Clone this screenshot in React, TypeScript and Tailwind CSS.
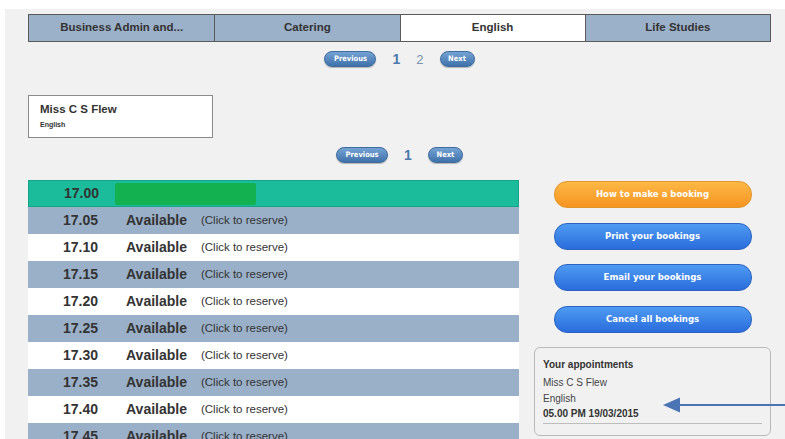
import React from "react";

const tabs = ["Business Admin and...", "Catering", "English", "Life Studies"];
const slots = ["17.05", "17.10", "17.15", "17.20", "17.25", "17.30", "17.35", "17.40", "17.45"];
const actions = ["Print your bookings", "Email your bookings", "Cancel all bookings"];

const condensed = { fontFamily: '"DejaVu Sans Condensed", "DejaVu Sans", Verdana, sans-serif' };

function PillButton({ label, width }: { label: string; width: string }) {
  return (
    <button
      className={`${width} h-[16px] rounded-full border border-[#3d6c9f] bg-gradient-to-b from-[#74a2d4] to-[#3f72aa] text-white text-[7.5px] font-bold leading-none flex items-center justify-center shadow-[0_1px_1px_rgba(0,0,0,0.25)]`}
      style={condensed}
    >
      {label}
    </button>
  );
}

function Pager({ pages }: { pages: number[] }) {
  return (
    <div className="flex items-center justify-center h-[16px]">
      <PillButton label="Previous" width="w-[52px]" />
      <div className="flex items-center gap-[16px] mx-[16px]">
        {pages.map((p, i) => (
          <span
            key={p}
            className={
              i === 0
                ? "text-[14px] font-bold text-[#4d79ab] leading-none"
                : "text-[13px] text-[#7892b3] leading-none"
            }
          >
            {p}
          </span>
        ))}
      </div>
      <PillButton label="Next" width="w-[35px]" />
    </div>
  );
}

function ActionButton({ label, orange }: { label: string; orange?: boolean }) {
  return (
    <button
      className={`w-[198px] h-[27px] rounded-[13px] border text-white text-[9.5px] font-bold flex items-center justify-center ${
        orange
          ? "border-[#e0962c] bg-gradient-to-b from-[#fdb845] to-[#f6941f]"
          : "border-[#2a62c0] bg-gradient-to-b from-[#4f9bf2] to-[#2a6cdc]"
      }`}
      style={condensed}
    >
      {label}
    </button>
  );
}

export default function App() {
  return (
    <div
      className="relative w-[785px] h-[439px] overflow-hidden bg-white text-[#333]"
      style={{ fontFamily: '"Liberation Sans", Arial, sans-serif' }}
    >
      <div className="ml-[5px] mt-[9px] h-[430px] bg-[#f1f1f1] pl-[23px] pt-[5px]">
        <div className="w-[743px]">
          {/* subject tabs */}
          <div className="grid grid-cols-4 h-[28px] border border-[#5a5a5a]">
            {tabs.map((t, i) => (
              <div
                key={t}
                className={`flex items-center justify-center text-[11.5px] font-bold ${
                  i > 0 ? "border-l border-[#5a5a5a]" : ""
                } ${t === "English" ? "bg-white" : "bg-[#9bb0c9]"}`}
              >
                {t}
              </div>
            ))}
          </div>

          <div className="mt-[9px]">
            <Pager pages={[1, 2]} />
          </div>

          {/* teacher card */}
          <div className="mt-[28px] w-[185px] h-[43px] bg-white border border-[#8a8a8a] pl-[11px] pt-[6px]">
            <div className="text-[11.5px] font-bold leading-[15px]">Miss C S Flew</div>
            <div className="text-[7px] font-bold mt-[3px] text-[#333]">English</div>
          </div>

          <div className="mt-[9px]">
            <Pager pages={[1]} />
          </div>

          <div className="mt-[17px] flex">
            {/* time slots */}
            <div className="w-[491px]">
              <div className="h-[27px] flex items-center bg-[#1abc9c] border border-[#14a487]">
                <span className="w-[70px] text-right text-[14px] font-bold">17.00</span>
                <div className="ml-[16px] w-[141px] h-[22px] rounded-[2px] bg-[#13b14f]" />
              </div>
              {slots.map((s, i) => (
                <div
                  key={s}
                  className={`h-[27px] flex items-center ${i % 2 === 0 ? "bg-[#9aafc8]" : "bg-white"}`}
                >
                  <span className="w-[70px] text-right text-[14px] font-bold">{s}</span>
                  <span className="ml-[28px] text-[14px] font-bold">Available</span>
                  <span className="ml-[14px] text-[11.5px] text-[#333]">(Click to reserve)</span>
                </div>
              ))}
            </div>

            {/* booking actions */}
            <div className="ml-[15px] w-[237px] pt-[1px] flex flex-col items-center">
              <ActionButton label="How to make a booking" orange />
              <div className="mt-[14.5px] flex flex-col gap-[14.5px]">
                {actions.map((a) => (
                  <ActionButton key={a} label={a} />
                ))}
              </div>

              <div className="mt-[14.5px] w-[237px] h-[89px] rounded-[6px] border border-[#b9b9b9] px-[8px] pt-[11px] text-[10px]">
                <div className="font-bold leading-[12px]">Your appointments</div>
                <div className="mt-[6px] leading-[12px] text-[#444]">Miss C S Flew</div>
                <div className="mt-[4px] leading-[12px] text-[#444]">English</div>
                <div className="mt-[3px] leading-[12px] font-bold">05.00 PM 19/03/2015</div>
                <div className="mt-[3px] border-t border-[#bdbdbd] w-[219px]" />
              </div>
            </div>
          </div>
        </div>
      </div>

      {/* pointer arrow */}
      <svg className="absolute left-[663px] top-[396px]" width="122" height="18" viewBox="0 0 122 18">
        <line x1="14" y1="9" x2="122" y2="9" stroke="#4a74b3" strokeWidth="2" />
        <polygon points="0,9 17,1.5 17,16.5" fill="#4a74b3" />
      </svg>
    </div>
  );
}
